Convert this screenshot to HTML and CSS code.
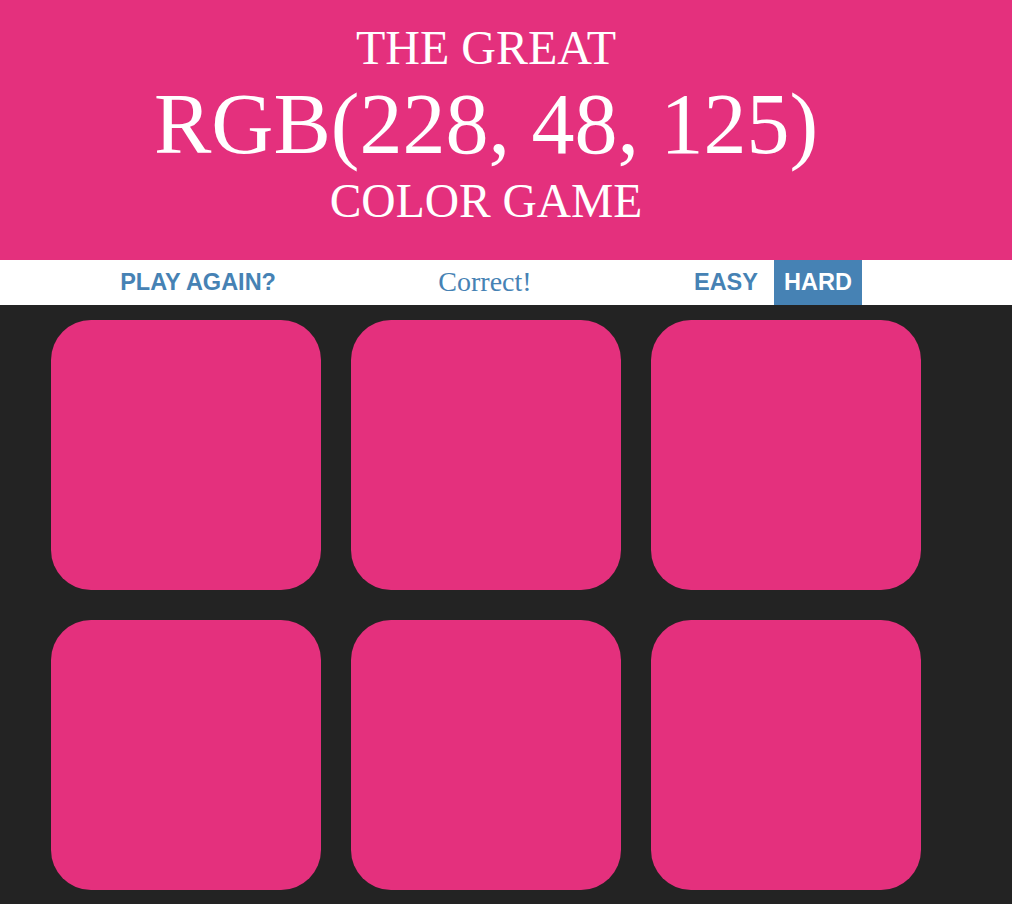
FILE: index.html
```html
<!DOCTYPE html>
<html>
<head>
<meta charset="utf-8">
<title>Color Game</title>
<link rel="stylesheet" href="styles.css">
</head>
<body>
<header class="banner">
  <div class="banner-inner">
    <div class="title-top">THE GREAT</div>
    <div class="color-display">RGB(228, 48, 125)</div>
    <div class="title-bottom">COLOR GAME</div>
  </div>
</header>
<nav class="stripe">
  <div class="stripe-inner">
    <button class="btn">PLAY AGAIN?</button>
    <span class="message">Correct!</span>
    <button class="btn">EASY</button>
    <button class="btn selected">HARD</button>
  </div>
</nav>
<main class="board">
  <div class="square"></div>
  <div class="square"></div>
  <div class="square"></div>
  <div class="square"></div>
  <div class="square"></div>
  <div class="square"></div>
</main>
</body>
</html>
```
FILE: styles.css
```css
html, body {
  margin: 0;
  padding: 0;
}
body {
  background: #232323;
  font-family: "Liberation Serif", "Times New Roman", serif;
  min-height: 904px;
}
.banner {
  background: rgb(228, 48, 125);
  height: 260px;
  color: #fff;
}
.banner-inner {
  width: 972px;
  text-align: center;
}
.title-top {
  font-size: 48px;
  line-height: 96px;
  height: 96px;
}
.color-display {
  font-size: 86px;
  line-height: 56px;
  height: 56px;
}
.title-bottom {
  font-size: 47.5px;
  line-height: 99px;
  height: 99px;
}
.stripe {
  background: #fff;
  height: 45px;
}
.stripe-inner {
  width: 972px;
  height: 45px;
  display: flex;
  justify-content: center;
  align-items: stretch;
  gap: 6px;
}
.btn {
  border: none;
  background: none;
  margin: 0;
  padding: 0 10px;
  font-family: "Liberation Sans", Arial, sans-serif;
  font-weight: 700;
  font-size: 23.5px;
  line-height: 45px;
  color: #4682b4;
  text-transform: uppercase;
}
.btn.selected {
  background: #4682b4;
  color: #fff;
}
.message {
  width: 386px;
  text-align: center;
  font-size: 28px;
  line-height: 43px;
  color: #4682b4;
}
.board {
  display: grid;
  grid-template-columns: repeat(3, 270px);
  gap: 30px;
  padding: 15px 0 0 51px;
}
.square {
  width: 270px;
  height: 270px;
  border-radius: 40px;
  background: rgb(228, 48, 125);
}
```
